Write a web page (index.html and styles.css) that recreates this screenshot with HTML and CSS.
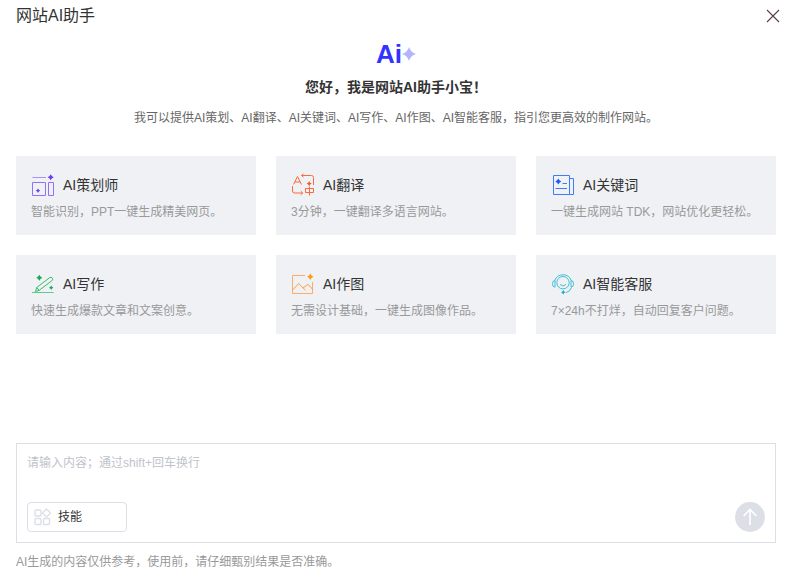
FILE: index.html
```html
<!DOCTYPE html>
<html lang="zh-CN">
<head>
<meta charset="utf-8">
<meta name="viewport" content="width=device-width, initial-scale=1">
<title>网站AI助手</title>
<link rel="stylesheet" href="styles.css">
</head>
<body>
<div class="assistant">
  <header class="header">
    <h1 class="title">网站AI助手</h1>
    <button class="close" type="button" aria-label="关闭">
      <svg width="14" height="14" viewBox="0 0 14 14" fill="none" stroke="#5c3a50" stroke-width="1.1"><path d="M1 1l12 12M13 1L1 13"/></svg>
    </button>
  </header>

  <main class="main">
    <section class="intro">
      <div class="logo">
        <span>Ai</span>
        <svg width="14" height="14" viewBox="0 0 14 14" fill="#b3b3ff"><path d="M7 0Q8.6 5.4 14 7Q8.6 8.6 7 14Q5.4 8.6 0 7Q5.4 5.4 7 0Z"/></svg>
      </div>
      <h2 class="greeting">您好，我是网站AI助手小宝！</h2>
      <p class="summary">我可以提供AI策划、AI翻译、AI关键词、AI写作、AI作图、AI智能客服，指引您更高效的制作网站。</p>
    </section>

    <section class="cards">
      <button class="card" type="button">
        <span class="card-head">
          <svg class="icon" viewBox="0 0 24 24" fill="none" stroke="#7a52f4">
            <path d="M1.5 4.5H15" stroke="#a992f8"/>
            <path d="M1.5 9.5h13v13h-13zM17.5 9.5h5v13h-5z" stroke="#9270f8"/>
            <path d="M19.700 1.300q.8 2.200 3 3q-2.200.8-3 3q-.8-2.200-3-3q2.200-.8 3-3zM7 15.500q.6 1.600 2.200 2.200q-1.600.6-2.200 2.200q-.6-1.600-2.200-2.200q1.600-.6 2.200-2.200z" fill="#6a3df0" stroke="none"/>
          </svg>
          <span class="card-title">AI策划师</span>
        </span>
        <span class="card-text">智能识别，PPT一键生成精美网页。</span>
      </button>

      <button class="card" type="button">
        <span class="card-head">
          <svg class="icon" viewBox="0 0 24 24" fill="none" stroke="#fa6a3c">
            <path d="M2.500 11.500L6.500 3.500l4 8M4 9h5" />
            <path d="M10.500 2.500h10a2 2 0 0 1 2 2V12M12.500.8l-2 1.700 2 1.700M1.500 13v5a2 2 0 0 0 2 2h8M9.700 18.200l2 1.800-2 1.800"/>
            <path d="M14.500 15.500h8v4h-8zM18.500 13.500V22.500"/>
            <path d="M18.200 8q.6 2 2.500 2.600q-1.900.6-2.500 2.600q-.6-2-2.500-2.600q1.900-.6 2.500-2.600z" fill="#f9531e" stroke="none"/>
          </svg>
          <span class="card-title">AI翻译</span>
        </span>
        <span class="card-text">3分钟，一键翻译多语言网站。</span>
      </button>

      <button class="card" type="button">
        <span class="card-head">
          <svg class="icon" viewBox="0 0 24 24" fill="none" stroke="#3f7bff">
            <path d="M2.500 2.500h16v19h-16zM18.500 5.500h4v16h-4M11.500 10.500H16M4.500 15.500H16"/>
            <path d="M7.300 5.500q.8 2.200 3 3q-2.200.8-3 3q-.8-2.200-3-3q2.200-.8 3-3z" fill="#145afa" stroke="none"/>
          </svg>
          <span class="card-title">AI关键词</span>
        </span>
        <span class="card-text">一键生成网站 TDK，网站优化更轻松。</span>
      </button>

      <button class="card" type="button">
        <span class="card-head">
          <svg class="icon" viewBox="0 0 24 24" fill="none" stroke="#35bd6b">
            <path d="M1 20.500H22.700" stroke="#5fc988"/>
            <path d="M4.500 19.500l1.200-4L18.600 5.700q1.500-1 2.700.3q1 1.600-.4 2.700L8.200 18.300zM5.700 15.500l2.500 2.800"/>
            <path d="M8.300 2.700q.8 2.200 3 3q-2.200.8-3 3q-.8-2.200-3-3q2.200-.8 3-3zM20.200 13.500q.6 1.600 2.200 2.200q-1.600.6-2.200 2.200q-.6-1.600-2.200-2.200q1.600-.6 2.200-2.200z" fill="#10b050" stroke="none"/>
          </svg>
          <span class="card-title">AI写作</span>
        </span>
        <span class="card-text">快速生成爆款文章和文案创意。</span>
      </button>

      <button class="card" type="button">
        <span class="card-head">
          <svg class="icon" viewBox="0 0 24 24" fill="none" stroke="#ffac6b">
            <path d="M14 3.500H1.500v18h20V10"/>
            <path d="M1.700 18L7.700 11.500l6.800 6.800M12 16l5-3.700 4.800 5.200" stroke="#ff9d3d"/>
            <path d="M19.300 1.500q.8 2.400 3.200 3.200q-2.400.8-3.200 3.200q-.8-2.400-3.200-3.200q2.400-.8 3.200-3.200z" fill="#ff9815" stroke="none"/>
          </svg>
          <span class="card-title">AI作图</span>
        </span>
        <span class="card-text">无需设计基础，一键生成图像作品。</span>
      </button>

      <button class="card" type="button">
        <span class="card-head">
          <svg class="icon" viewBox="0 0 24 24" fill="none" stroke="#42bfd5">
            <circle cx="12" cy="10.700" r="6.200"/>
            <path d="M3.700 8.500A8.900 8.900 0 0 1 20.300 8.500M9 12.500q3 3 6 0M20.500 15.500q-1.500 4.500-5.500 5"/>
            <path d="M4 8.500q-2.500 0-2.500 3.300T4 15.200zM20 8.500q2.500 0 2.500 3.300T20 15.200z"/>
            <path d="M12.300 18q.6 1.700 2.300 2.300q-1.700.6-2.300 2.300q-.6-1.700-2.300-2.300q1.700-.6 2.300-2.300z" fill="#16b2cf" stroke="none"/>
          </svg>
          <span class="card-title">AI智能客服</span>
        </span>
        <span class="card-text">7×24h不打烊，自动回复客户问题。</span>
      </button>
    </section>

    <form class="composer">
      <textarea class="prompt" aria-label="请输入内容" placeholder="请输入内容；通过shift+回车换行"></textarea>
      <div class="actions">
        <button class="skills" type="button">
          <svg width="18" height="18" viewBox="0 0 18 18" fill="none" stroke="#dcdfe6" stroke-width="1.400"><rect x="1" y="2" width="6" height="6" rx="1"/><rect x="1" y="10.500" width="6" height="6" rx="1"/><rect x="9.500" y="10.500" width="6" height="6" rx="1"/><path d="M12.500 1l4 4-4 4-4-4z" stroke-linejoin="round"/></svg>
          <span>技能</span>
        </button>
        <button class="send" type="button" aria-label="发送">
          <svg width="30" height="30" viewBox="0 0 30 30" fill="none" stroke="#fff" stroke-width="1.600"><path d="M15 23V7.500M8.500 14L15 7.500l6.500 6.500"/></svg>
        </button>
      </div>
    </form>
    <p class="notice">AI生成的内容仅供参考，使用前，请仔细甄别结果是否准确。</p>
  </main>
</div>
</body>
</html>
```
FILE: styles.css
```css
* {
  box-sizing: border-box;
}

body {
  margin: 0;
  background: #fff;
  color: #333;
  font-family: "Liberation Sans", "Noto Sans CJK SC", sans-serif;
  font-size: 12px;
  line-height: 20px;
}

h1, h2, p {
  margin: 0;
}

button, textarea {
  font: inherit;
  color: inherit;
}

svg {
  display: block;
  flex: none;
}

.assistant {
  display: flex;
  flex-direction: column;
  min-height: 100vh;
}

.header {
  display: flex;
  align-items: center;
  justify-content: space-between;
  padding: 4px 10px 4px 16px;
}

.title {
  font-size: 16px;
  font-weight: 400;
  line-height: 23px;
}

.close {
  padding: 0;
  border: 0;
  background: none;
  cursor: pointer;
}

.main {
  flex: 1;
  display: flex;
  flex-direction: column;
  padding: 9px 14px 11px 16px;
}

.intro {
  text-align: center;
}

.logo {
  display: flex;
  align-items: center;
  justify-content: center;
  color: #3333ff;
  font-size: 26px;
  font-weight: 700;
  line-height: 28px;
}

.greeting {
  margin-top: 9px;
  font-size: 14px;
  font-weight: 700;
}

.summary {
  margin-top: 11px;
  color: #666;
}

.cards {
  display: grid;
  grid-template-columns: repeat(3, 1fr);
  gap: 20px;
  margin: 28px 0;
}

.card {
  display: flex;
  flex-direction: column;
  gap: 5px;
  padding: 17px 15px 13px;
  border: 0;
  background: #eff1f5;
  text-align: left;
  cursor: pointer;
}

.card-head {
  display: flex;
  align-items: center;
  gap: 8px;
}

.icon {
  width: 24px;
  height: 24px;
}

.card-title {
  font-size: 14px;
}

.card-text {
  color: #999;
}

.composer {
  margin-top: auto;
  padding: 10px;
  border: 1px solid #dcdfe6;
}

.prompt {
  display: block;
  width: 100%;
  height: 48px;
  padding: 0;
  border: 0;
  outline: 0;
  resize: none;
  background: none;
  line-height: 18px;
}

.prompt::placeholder {
  color: #c0c4cc;
}

.actions {
  display: flex;
  align-items: center;
  justify-content: space-between;
}

.skills {
  display: flex;
  align-items: center;
  gap: 6px;
  width: 100px;
  height: 30px;
  padding: 0 6px;
  border: 1px solid #dcdfe6;
  border-radius: 4px;
  background: #fff;
  cursor: pointer;
}

.send {
  padding: 0;
  border: 0;
  border-radius: 50%;
  background: #dcdfe6;
  cursor: pointer;
}

.notice {
  margin-top: 9px;
  color: #999;
}
```
